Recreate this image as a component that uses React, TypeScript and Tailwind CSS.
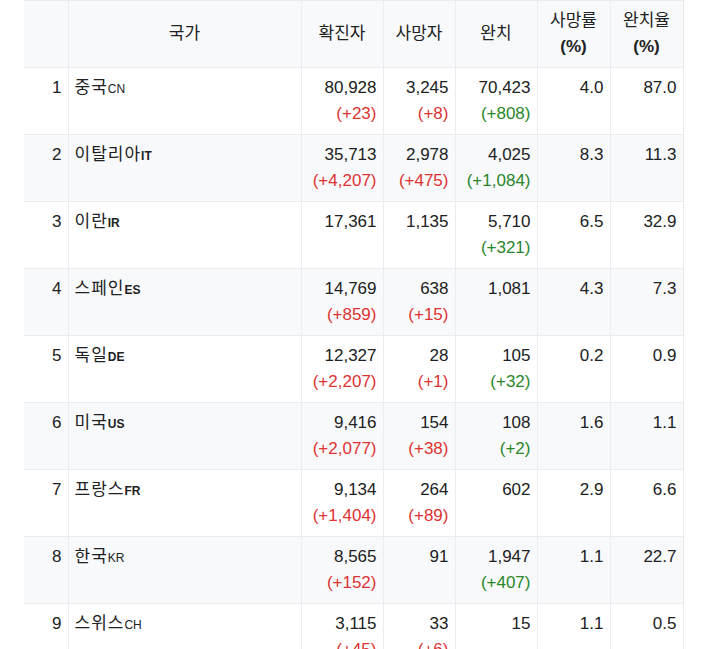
import React from 'react';

interface Row {
  rank: number;
  name: string;
  code: string;
  codeBold: boolean;
  confirmed: string;
  confirmedNew?: string;
  deaths: string;
  deathsNew?: string;
  recovered: string;
  recoveredNew?: string;
  deathRate: string;
  recoveryRate: string;
}

const rows: Row[] = [
  { rank: 1, name: '중국', code: 'CN', codeBold: false, confirmed: '80,928', confirmedNew: '(+23)', deaths: '3,245', deathsNew: '(+8)', recovered: '70,423', recoveredNew: '(+808)', deathRate: '4.0', recoveryRate: '87.0' },
  { rank: 2, name: '이탈리아', code: 'IT', codeBold: true, confirmed: '35,713', confirmedNew: '(+4,207)', deaths: '2,978', deathsNew: '(+475)', recovered: '4,025', recoveredNew: '(+1,084)', deathRate: '8.3', recoveryRate: '11.3' },
  { rank: 3, name: '이란', code: 'IR', codeBold: true, confirmed: '17,361', deaths: '1,135', recovered: '5,710', recoveredNew: '(+321)', deathRate: '6.5', recoveryRate: '32.9' },
  { rank: 4, name: '스페인', code: 'ES', codeBold: true, confirmed: '14,769', confirmedNew: '(+859)', deaths: '638', deathsNew: '(+15)', recovered: '1,081', deathRate: '4.3', recoveryRate: '7.3' },
  { rank: 5, name: '독일', code: 'DE', codeBold: true, confirmed: '12,327', confirmedNew: '(+2,207)', deaths: '28', deathsNew: '(+1)', recovered: '105', recoveredNew: '(+32)', deathRate: '0.2', recoveryRate: '0.9' },
  { rank: 6, name: '미국', code: 'US', codeBold: true, confirmed: '9,416', confirmedNew: '(+2,077)', deaths: '154', deathsNew: '(+38)', recovered: '108', recoveredNew: '(+2)', deathRate: '1.6', recoveryRate: '1.1' },
  { rank: 7, name: '프랑스', code: 'FR', codeBold: true, confirmed: '9,134', confirmedNew: '(+1,404)', deaths: '264', deathsNew: '(+89)', recovered: '602', deathRate: '2.9', recoveryRate: '6.6' },
  { rank: 8, name: '한국', code: 'KR', codeBold: false, confirmed: '8,565', confirmedNew: '(+152)', deaths: '91', recovered: '1,947', recoveredNew: '(+407)', deathRate: '1.1', recoveryRate: '22.7' },
  { rank: 9, name: '스위스', code: 'CH', codeBold: false, confirmed: '3,115', confirmedNew: '(+45)', deaths: '33', deathsNew: '(+6)', recovered: '15', deathRate: '1.1', recoveryRate: '0.5' },
];

const th = 'border border-[#eaecf0] px-[6px] py-[7px] font-normal text-center align-middle';
const td = 'border border-[#eaecf0] px-[6px] pt-[7px] pb-[7px] align-top text-right';

function Num({ value, delta, tone }: { value: string; delta?: string; tone: 'red' | 'green' }) {
  return (
    <>
      <div>{value}</div>
      {delta && <div className={tone === 'red' ? 'text-[#d33]' : 'text-[#2a862a]'}>{delta}</div>}
    </>
  );
}

export default function App() {
  return (
    <div className="bg-white min-h-[649px] pl-[24px] overflow-hidden">
      <table
        className="border-collapse table-fixed text-[17px] leading-[26px] text-[#202122]"
        style={{ fontFamily: '"Liberation Sans", Arial, "Noto Sans CJK KR", sans-serif' }}
      >
        <colgroup>
          <col className="w-[44px]" />
          <col className="w-[233px]" />
          <col className="w-[82px]" />
          <col className="w-[72px]" />
          <col className="w-[82px]" />
          <col className="w-[73px]" />
          <col className="w-[73px]" />
        </colgroup>
        <thead>
          <tr className="bg-[#f8f9fa] h-[67px]">
            <th className={th + ' border-l-0'}></th>
            <th className={th}>국가</th>
            <th className={th}>확진자</th>
            <th className={th}>사망자</th>
            <th className={th}>완치</th>
            <th className={th}>
              <div>사망률</div>
              <div className="font-bold">(%)</div>
            </th>
            <th className={th}>
              <div>완치율</div>
              <div className="font-bold">(%)</div>
            </th>
          </tr>
        </thead>
        <tbody>
          {rows.map((r) => (
            <tr key={r.rank} className={r.rank % 2 === 0 ? 'bg-[#f8f9fa]' : 'bg-white'}>
              <td className={td + ' border-l-0'}>{r.rank}</td>
              <td className="border border-[#eaecf0] px-[6px] pt-[7px] pb-[7px] align-top text-left">
                <span className="tracking-[1px]">{r.name}</span>
                <span className={'text-[12px] ' + (r.codeBold ? 'font-bold' : '')}>{r.code}</span>
              </td>
              <td className={td}>
                <Num value={r.confirmed} delta={r.confirmedNew} tone="red" />
              </td>
              <td className={td}>
                <Num value={r.deaths} delta={r.deathsNew} tone="red" />
              </td>
              <td className={td}>
                <Num value={r.recovered} delta={r.recoveredNew} tone="green" />
              </td>
              <td className={td}>{r.deathRate}</td>
              <td className={td}>{r.recoveryRate}</td>
            </tr>
          ))}
        </tbody>
      </table>
    </div>
  );
}
